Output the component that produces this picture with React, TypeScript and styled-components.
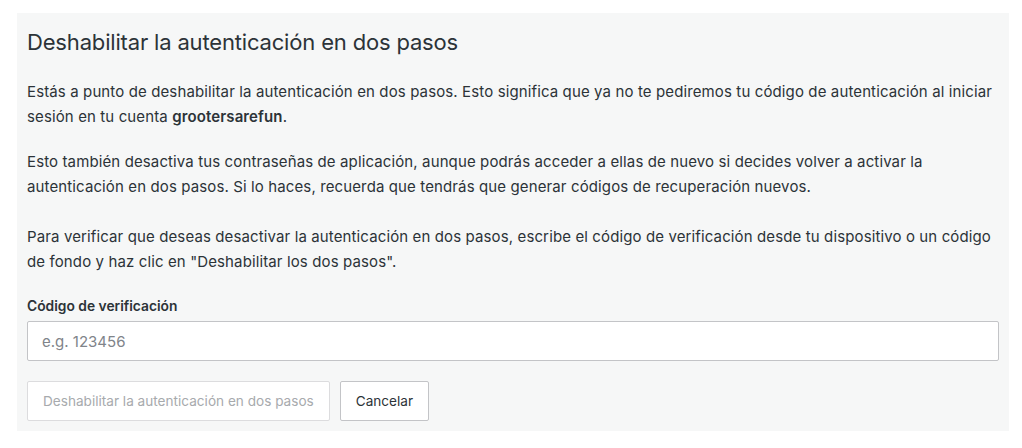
import React from "react";
import styled, { createGlobalStyle } from "styled-components";

const GlobalStyle = createGlobalStyle`
  html, body {
    margin: 0;
    padding: 0;
    background: #ffffff;
  }
  body {
    font-family: Inter, "Noto Sans", "Liberation Sans", sans-serif;
    color: #2c3338;
  }
  * { box-sizing: border-box; }
`;

const Page = styled.div`
  padding: 13px 13px 17px 17px;
`;

const Panel = styled.section`
  background: #f6f7f7;
  padding: 14px 10px 10px 10px;
  display: flex;
  flex-direction: column;
`;

const Title = styled.h2`
  margin: 0 0 22px 0;
  font-size: 22px;
  font-weight: 400;
  line-height: 30px;
  letter-spacing: -0.17px;
  color: #2c3338;
`;

const Paragraph = styled.p<{ $gap?: number }>`
  margin: 0 0 ${(p) => p.$gap ?? 20}px 0;
  font-size: 15px;
  line-height: 25px;
  color: #2c3338;
  letter-spacing: 0.12px;
`;

const Strong = styled.strong`
  font-weight: 600;
`;

const Label = styled.label`
  display: block;
  margin: 0 0 5px 0;
  font-size: 13.8px;
  font-weight: 600;
  line-height: 20px;
  color: #2c3338;
`;

const Input = styled.input`
  display: block;
  width: 100%;
  height: 40px;
  margin: 0 0 20px 0;
  padding: 0 14px;
  border: 1px solid #c3c4c7;
  border-radius: 2px;
  background: #ffffff;
  font-family: inherit;
  font-size: 15px;
  color: #2c3338;
  outline: none;
  &::placeholder {
    color: #80848a;
  }
`;

const Actions = styled.div`
  display: flex;
  gap: 10px;
`;

const Button = styled.button<{ $muted?: boolean }>`
  height: 40px;
  padding: 0 15px;
  border: 1px solid ${(p) => (p.$muted ? "#dcdcde" : "#c3c4c7")};
  border-radius: 2px;
  background: #ffffff;
  font-family: inherit;
  font-size: 13.6px;
  color: ${(p) => (p.$muted ? "#a7aaad" : "#2c3338")};
  cursor: ${(p) => (p.$muted ? "default" : "pointer")};
`;

export default function App() {
  return (
    <>
      <GlobalStyle />
      <Page>
        <Panel>
          <Title>Deshabilitar la autenticación en dos pasos</Title>
          <Paragraph>
            Estás a punto de deshabilitar la autenticación en dos pasos. Esto
            significa que ya no te pediremos tu código de autenticación al
            iniciar sesión en tu cuenta <Strong>grootersarefun</Strong>.
          </Paragraph>
          <Paragraph $gap={25}>
            Esto también desactiva tus contraseñas de aplicación, aunque podrás
            acceder a ellas de nuevo si decides volver a activar la
            autenticación en dos pasos. Si lo haces, recuerda que tendrás que
            generar códigos de recuperación nuevos.
          </Paragraph>
          <Paragraph $gap={22}>
            Para verificar que deseas desactivar la autenticación en dos pasos,
            escribe el código de verificación desde tu dispositivo o un código
            de fondo y haz clic en "Deshabilitar los dos pasos".
          </Paragraph>
          <Label htmlFor="code">Código de verificación</Label>
          <Input id="code" placeholder="e.g. 123456" />
          <Actions>
            <Button $muted disabled>
              Deshabilitar la autenticación en dos pasos
            </Button>
            <Button>Cancelar</Button>
          </Actions>
        </Panel>
      </Page>
    </>
  );
}
